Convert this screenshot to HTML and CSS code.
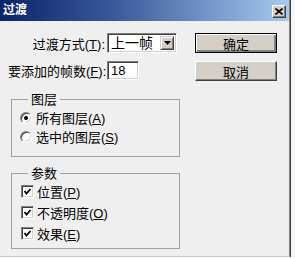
FILE: index.html
```html
<!DOCTYPE html>
<html lang="zh-CN">
<head>
    <meta charset="UTF-8">
    <title>过渡</title>
    <link rel="stylesheet" href="styles.css">
</head>
<body>
    <div class="window">
        <div class="titlebar">
            <span class="title">过渡</span>
            <span class="close">
                <svg width="8" height="7" viewBox="0 0 8 7"><path d="M0.5 0.5 L7.5 6.5 M7.5 0.5 L0.5 6.5" stroke="#000" stroke-width="1.6" fill="none"/></svg>
            </span>
        </div>
        <div class="main">
            <div class="left">
                <div class="fields">
                    <label class="lbl">过渡方式(<u>T</u>):</label>
                    <div class="select">
                        <span class="select-text">上一帧</span>
                        <span class="select-btn">
                            <svg width="7" height="4" viewBox="0 0 7 4"><path d="M0 0 H7 L3.5 4 Z" fill="#000"/></svg>
                        </span>
                    </div>
                    <label class="lbl">要添加的帧数(<u>F</u>):</label>
                    <div class="input">18</div>
                </div>

                <fieldset class="group layers">
                    <legend>图层</legend>
                    <div class="opt"><span class="radio on"></span><span>所有图层(<u>A</u>)</span></div>
                    <div class="opt"><span class="radio"></span><span>选中的图层(<u>S</u>)</span></div>
                </fieldset>

                <fieldset class="group params">
                    <legend>参数</legend>
                    <div class="opt check-row"><span class="check"><svg width="9" height="9" viewBox="0 0 9 9"><path d="M1.5 4 L3.5 6.5 L7.5 2" stroke="#000" stroke-width="1.8" fill="none"/></svg></span><span>位置(<u>P</u>)</span></div>
                    <div class="opt check-row"><span class="check"><svg width="9" height="9" viewBox="0 0 9 9"><path d="M1.5 4 L3.5 6.5 L7.5 2" stroke="#000" stroke-width="1.8" fill="none"/></svg></span><span>不透明度(<u>O</u>)</span></div>
                    <div class="opt check-row"><span class="check"><svg width="9" height="9" viewBox="0 0 9 9"><path d="M1.5 4 L3.5 6.5 L7.5 2" stroke="#000" stroke-width="1.8" fill="none"/></svg></span><span>效果(<u>E</u>)</span></div>
                </fieldset>
            </div>
            <div class="right">
                <button class="btn default">确定</button>
                <button class="btn">取消</button>
            </div>
        </div>
    </div>
</body>
</html>
```

FILE: styles.css
```css
* {
    box-sizing: border-box;
    font-family: "Liberation Sans", "Noto Sans CJK SC", sans-serif;
}
body {
    margin: 0;
    background-color: #f6f6f6;
    width: 295px;
    height: 258px;
    overflow: hidden;
}
.window {
    width: 290px;
    height: 257px;
    background-color: #efefef;
    border-right: 1px solid #808080;
    border-bottom: 1px solid #c8c8c8;
    box-shadow: 1px 0 0 #404040;
}
.titlebar {
    height: 21px;
    display: flex;
    align-items: center;
    justify-content: space-between;
    padding: 0 3px 0 3px;
    background: linear-gradient(to right, #0a246a, #3a5a9a 40%, #a6caf0);
}
.title {
    color: #fff;
    font-weight: bold;
    font-size: 12px;
    line-height: 21px;
}
.close {
    width: 14px;
    height: 13px;
    margin-top: 2px;
    display: flex;
    align-items: center;
    justify-content: center;
    background-color: #d4d0c8;
    border: 1px solid;
    border-color: #fff #404040 #404040 #fff;
    box-shadow: inset -1px -1px 0 #808080;
}
.main {
    display: flex;
    gap: 15px;
    padding: 12px 0 0 8px;
}
.left {
    width: 172px;
}
.fields {
    display: grid;
    grid-template-columns: 97px auto;
    column-gap: 2px;
    row-gap: 8px;
    align-items: center;
    font-size: 13px;
}
.lbl {
    text-align: right;
    white-space: nowrap;
    color: #000;
}
.select {
    width: 70px;
    height: 20px;
    display: flex;
    background-color: #fff;
    border: 1px solid;
    border-color: #808080 #fff #fff #808080;
    box-shadow: inset 1px 1px 0 #404040, inset -1px -1px 0 #d4d0c8;
    padding: 2px;
}
.select-text {
    flex: 1;
    line-height: 14px;
    padding-left: 1px;
    font-size: 14px;
}
.select-btn {
    width: 14px;
    display: flex;
    align-items: center;
    justify-content: center;
    background-color: #d4d0c8;
    border: 1px solid;
    border-color: #d4d0c8 #404040 #404040 #d4d0c8;
    box-shadow: inset 1px 1px 0 #fff, inset -1px -1px 0 #808080;
}
.input {
    width: 32px;
    height: 19px;
    background-color: #fff;
    border: 1px solid;
    border-color: #808080 #fff #fff #808080;
    box-shadow: inset 1px 1px 0 #404040, inset -1px -1px 0 #d4d0c8;
    padding: 1px 0 0 3px;
    line-height: 15px;
}
.group {
    margin: 0 0 0 3px;
    width: 169px;
    border: 1px solid #a0a0a0;
    padding: 0 0 10px 8px;
    font-size: 13px;
}
.layers {
    margin-top: 12px;
}
.params {
    margin-top: 9px;
    padding-bottom: 4px;
}
.group legend {
    padding: 0 3px;
    margin-left: 8px;
    line-height: 15px;
}
.opt {
    height: 19px;
    display: flex;
    align-items: center;
    gap: 3px;
}
.check-row {
    height: 21px;
}
.layers .opt:first-of-type {
    margin-top: 1px;
}
.radio {
    width: 12px;
    height: 12px;
    border-radius: 50%;
    background-color: #fff;
    border: 1px solid;
    border-color: #808080 #fff #fff #808080;
    box-shadow: inset 1px 1px 0 #404040, inset -1px -1px 0 #d4d0c8;
    display: flex;
    align-items: center;
    justify-content: center;
    margin-right: 1px;
}
.radio.on::after {
    content: "";
    width: 4px;
    height: 4px;
    border-radius: 50%;
    background-color: #000;
}
.check {
    width: 13px;
    height: 13px;
    margin-left: 1px;
    background-color: #fff;
    border: 1px solid;
    border-color: #808080 #fff #fff #808080;
    box-shadow: inset 1px 1px 0 #404040, inset -1px -1px 0 #d4d0c8;
    display: flex;
    align-items: center;
    justify-content: center;
}
.right {
    display: flex;
    flex-direction: column;
    gap: 8px;
}
.btn {
    width: 82px;
    height: 20px;
    padding: 0;
    font-size: 13px;
    color: #000;
    background-color: #d4d0c8;
    border: 1px solid;
    border-color: #fff #404040 #404040 #fff;
    box-shadow: inset -1px -1px 0 #808080;
}
.btn.default {
    border: 1px solid #000;
    box-shadow: inset 1px 1px 0 #fff, inset -2px -2px 0 #808080;
}
```
